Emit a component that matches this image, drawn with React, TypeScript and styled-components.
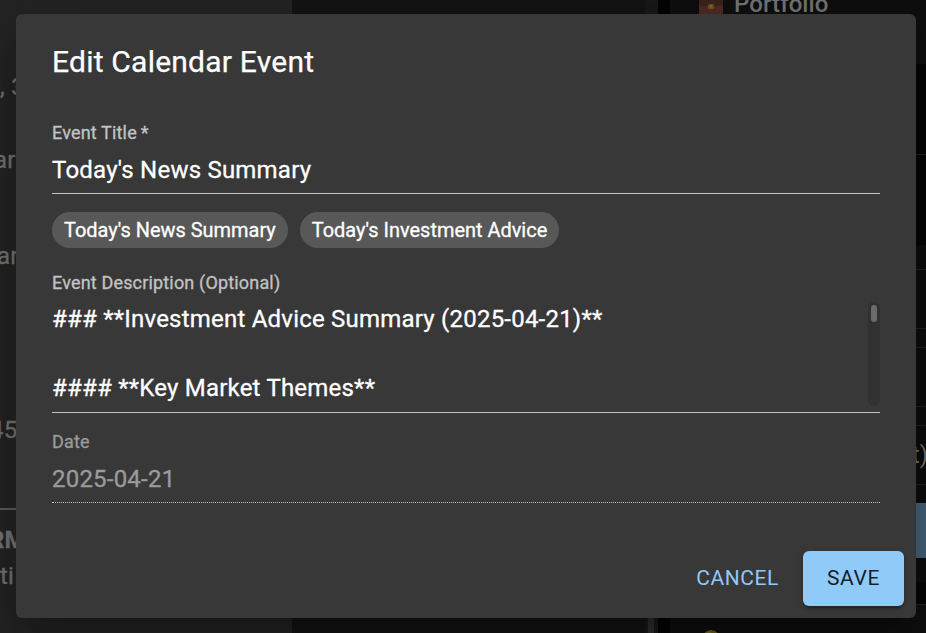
import React from "react";
import styled, { createGlobalStyle } from "styled-components";

const GlobalStyle = createGlobalStyle`
  * { box-sizing: border-box; }
  body {
    margin: 0;
    background: #121212;
    font-family: Roboto, "Liberation Sans", sans-serif;
    overflow: hidden;
  }
`;

const Screen = styled.div`
  position: relative;
  width: 926px;
  height: 633px;
  overflow: hidden;
`;

const Page = styled.div`
  display: grid;
  grid-template-columns: 292px 366px 12px 256px;
  height: 633px;
  color: #747474;
  font-size: 24px;
  line-height: 36px;
`;

const Sidebar = styled.div`
  background: #242424;
  display: flex;
  flex-direction: column;
  overflow: hidden;
`;

const SideText = styled.div<{ $gap: number; $shift: number; $bold?: boolean }>`
  margin-top: ${(p) => p.$gap}px;
  margin-left: ${(p) => p.$shift}px;
  height: 36px;
  white-space: nowrap;
  letter-spacing: 0.00938em;
  font-weight: ${(p) => (p.$bold ? 700 : 400)};
  -webkit-text-stroke: 0.3px currentColor;
`;

const SideRule = styled.div`
  margin-top: 60px;
  height: 2px;
  background: #5c5c5c;
  flex-shrink: 0;
`;

const Feed = styled.div`
  background: #141414;
  display: flex;
  justify-content: flex-end;
  align-items: stretch;
`;

const FeedEdge = styled.div`
  width: 13px;
  background: #191919;
  display: flex;
  align-items: flex-end;
`;

const FeedThumb = styled.div`
  margin-left: 3px;
  width: 6px;
  height: 60px;
  background: #2f2f2f;
`;

const Gutter = styled.div`
  background: #050505;
`;

const Portfolio = styled.div`
  background: #0f0f0f;
  display: flex;
  flex-direction: column;
  overflow: hidden;
`;

const PortfolioHeading = styled.div`
  height: 64px;
  flex-shrink: 0;
  padding-left: 29px;
  display: flex;
  align-items: flex-start;
  gap: 10px;
  font-weight: 500;
  letter-spacing: 0.003em;

  svg { margin-top: -8px; }
  span { margin: -14px 0 0 1px; }
`;

const Band = styled.div<{ $h: number; $bg?: string; $line?: boolean }>`
  height: ${(p) => p.$h}px;
  flex-shrink: 0;
  background: ${(p) => p.$bg || "#0d0d0d"};
  border-bottom: ${(p) => (p.$line ? "1px solid #242424" : "none")};
  display: flex;
  justify-content: flex-end;
  align-items: center;

  span { margin-right: -2px; }
`;

const Tail = styled.div`
  display: flex;
  justify-content: space-between;
  padding: 24px 19px 0 31px;
  line-height: 28px;
`;

const Dialog = styled.form`
  position: absolute;
  left: 16px;
  top: 14px;
  width: 900px;
  height: 604px;
  border-radius: 6px;
  background: #383838;
  color: #fff;
  display: flex;
  flex-direction: column;
  box-shadow: 0 16.5px 22.5px -10.5px rgba(0, 0, 0, 0.2),
    0 36px 57px 4.5px rgba(0, 0, 0, 0.14), 0 13.5px 69px 12px rgba(0, 0, 0, 0.12);
`;

const DialogTitle = styled.h2`
  margin: 0;
  padding: 24px 36px;
  height: 96px;
  font-size: 30px;
  line-height: 48px;
  font-weight: 400;
  letter-spacing: 0.0075em;
  -webkit-text-stroke: 0.25px currentColor;
`;

const Content = styled.div`
  padding: 10px 36px 0;
  flex: 1;
`;

const Field = styled.label<{ $disabled?: boolean; $h: number }>`
  display: flex;
  flex-direction: column;
  height: ${(p) => p.$h}px;
  border-bottom: 1px ${(p) => (p.$disabled ? "dotted" : "solid")} rgba(255, 255, 255, 0.7);
  color: ${(p) => (p.$disabled ? "#9b9b9b" : "#fff")};
`;

const Label = styled.span<{ $disabled?: boolean }>`
  font-size: 18px;
  line-height: 26px;
  height: 24px;
  letter-spacing: 0.00938em;
  color: ${(p) => (p.$disabled ? "#9b9b9b" : "#c3c3c3")};
  -webkit-text-stroke: 0.3px currentColor;
`;

const inputText = `
  font-family: inherit;
  font-size: 24px;
  letter-spacing: 0.009em;
  font-weight: 400;
  color: inherit;
  background: none;
  border: 0;
  outline: 0;
  padding: 0;
  margin: 0;
  -webkit-text-stroke: 0.3px currentColor;
`;

const Input = styled.input`
  ${inputText}
  height: 35px;
  margin-top: 8px;
`;

const TextRow = styled.div`
  display: flex;
  height: 104px;
  margin-top: 8px;
`;

const TextArea = styled.div`
  ${inputText}
  flex: 1;
  line-height: 34.5px;
  white-space: pre-wrap;
  overflow: hidden;
`;

const ScrollTrack = styled.div`
  width: 12px;
  border-radius: 6px;
  background: #313131;
  padding: 3px;
`;

const ScrollThumb = styled.div`
  height: 17px;
  border-radius: 3px;
  background: #6b6b6b;
`;

const Chips = styled.div`
  display: flex;
  gap: 12px;
  margin: 18px 0 22px;
`;

const Chip = styled.button`
  height: 36px;
  border: 0;
  border-radius: 18px;
  padding: 1px 12px 0;
  background: #585858;
  color: #fff;
  font-family: inherit;
  font-size: 19.95px;
  line-height: 35px;
  white-space: nowrap;
  -webkit-text-stroke: 0.3px currentColor;
`;

const DateBlock = styled.div`
  margin-top: 16px;
`;

const Actions = styled.div`
  display: flex;
  justify-content: flex-end;
  gap: 12px;
  padding: 12px;
`;

const Button = styled.button<{ $primary?: boolean }>`
  height: 55px;
  border: 0;
  border-radius: 6px;
  padding: 0 ${(p) => (p.$primary ? 24 : 12)}px 2px;
  font-family: inherit;
  font-size: 21px;
  font-weight: 400;
  letter-spacing: 0.02857em;
  color: ${(p) => (p.$primary ? "rgba(0, 0, 0, 0.87)" : "#90caf9")};
  background: ${(p) => (p.$primary ? "#90caf9" : "transparent")};
  box-shadow: ${(p) =>
    p.$primary
      ? "0 4.5px 1.5px -3px rgba(0,0,0,.2), 0 3px 3px rgba(0,0,0,.14), 0 1.5px 7.5px rgba(0,0,0,.12)"
      : "none"};
`;

const Briefcase = () => (
  <svg width="24" height="24" viewBox="0 0 24 24">
    <rect width="24" height="24" rx="2" fill="#4d2c24" />
    <path d="M0 0H24V12Q22 14 20 14H4Q2 14 0 12Z" fill="#3a241f" />
    <rect x="9" y="12" width="6" height="5" rx="1.5" fill="#72501c" />
    <rect x="11" y="13.5" width="2" height="2" fill="#8c6b24" />
  </svg>
);

const Bulb = () => (
  <svg width="20" height="24" viewBox="0 0 20 24">
    <circle cx="10" cy="10" r="9" fill="#6e5d18" />
    <circle cx="8" cy="8" r="5" fill="#82702a" />
  </svg>
);

const description = "### **Investment Advice Summary (2025-04-21)**\n\n#### **Key Market Themes**";

export default function App() {
  return (
    <Screen>
      <GlobalStyle />
      <Page>
        <Sidebar>
          <SideText $gap={69} $shift={0}>, 3</SideText>
          <SideText $gap={37} $shift={-6}>are</SideText>
          <SideText $gap={60} $shift={-3}>ar</SideText>
          <SideText $gap={138} $shift={-10}>45</SideText>
          <SideRule />
          <SideText $gap={12} $shift={-11} $bold>RM</SideText>
          <SideText $gap={0} $shift={0}>ti</SideText>
        </Sidebar>
        <Feed>
          <FeedEdge><FeedThumb /></FeedEdge>
        </Feed>
        <Gutter />
        <Portfolio>
          <PortfolioHeading>
            <Briefcase />
            <span>Portfolio</span>
          </PortfolioHeading>
          <Band $h={91} $bg="#070707" $line />
          <Band $h={90} $bg="#070707" />
          <Band $h={25} $line />
          <Band $h={59} $line />
          <Band $h={19} $line />
          <Band $h={59} $line />
          <Band $h={19} $line />
          <Band $h={59} $line><span>t)</span></Band>
          <Band $h={18} />
          <Band $h={55} $bg="#48647c" />
          <Band $h={24} />
          <Band $h={23} $bg="#070707" $line />
          <Tail>
            <Bulb />
            <span>d</span>
          </Tail>
        </Portfolio>
      </Page>
      <Dialog onSubmit={(e) => e.preventDefault()}>
        <DialogTitle>Edit Calendar Event</DialogTitle>
        <Content>
          <Field $h={74}>
            <Label>Event Title{"\u2009"}*</Label>
            <Input defaultValue="Today's News Summary" />
          </Field>
          <Chips>
            <Chip type="button">Today's News Summary</Chip>
            <Chip type="button">Today's Investment Advice</Chip>
          </Chips>
          <Field as="div" $h={143}>
            <Label>Event Description (Optional)</Label>
            <TextRow>
              <TextArea>{description}</TextArea>
              <ScrollTrack><ScrollThumb /></ScrollTrack>
            </TextRow>
          </Field>
          <DateBlock>
            <Field $h={74} $disabled>
              <Label $disabled>Date</Label>
              <Input disabled defaultValue="2025-04-21" />
            </Field>
          </DateBlock>
        </Content>
        <Actions>
          <Button type="button">CANCEL</Button>
          <Button $primary type="submit">SAVE</Button>
        </Actions>
      </Dialog>
    </Screen>
  );
}
